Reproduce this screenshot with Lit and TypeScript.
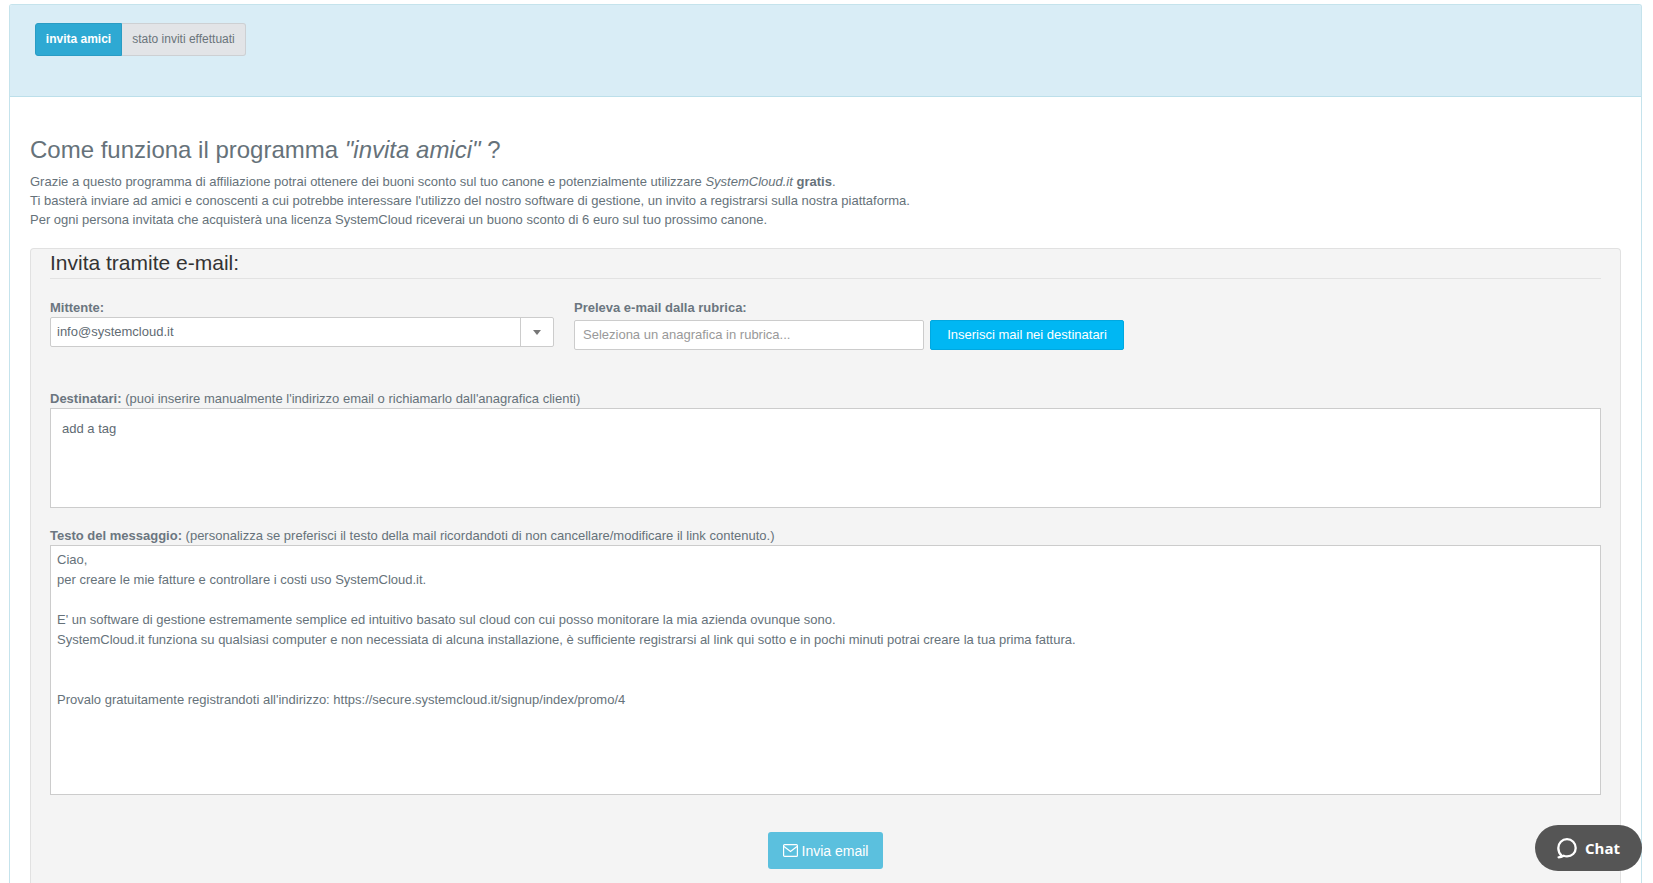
import { LitElement, html, css } from "lit";
import { customElement } from "lit/decorators.js";

@customElement("app-root")
export class AppRoot extends LitElement {
  static styles = css`
    :host { display: block; height: 883px; overflow: hidden; position: relative; background: #fff;
      font-family: "Liberation Sans", Arial, sans-serif; font-size: 13px; color: #66727a; box-sizing: border-box; padding: 4px 11px 0 9px; }
    * { box-sizing: border-box; }
    .panel { border: 1px solid #c5e3ec; border-bottom: 0; height: 879px; overflow: hidden; border-radius: 3px 3px 0 0; }
    .head { height: 92px; background: #d9edf6; border-bottom: 1px solid #bcdfea; padding: 18px 0 0 25px; }
    .tabs { display: inline-flex; height: 33px; font-size: 12px; }
    .tab { display: flex; align-items: center; line-height: 1; padding-bottom: 2px; }
    .tab.on { width: 87px; justify-content: center; background: #2ea9d3; color: #fff; font-weight: 700; border-radius: 3px 0 0 3px; border: 1px solid #2a9cc4; }
    .tab.off { width: 124px; justify-content: center; background: #e2e4e7; color: #6a747b; border: 1px solid #cdd0d3; border-left: 0; border-radius: 0 3px 3px 0; }
    .body { padding: 39px 20px 0 20px; }
    h1 { margin: 0; font-size: 24px; font-weight: 400; line-height: 28px; color: #66727a; }
    .intro { margin: 8px 0 0; line-height: 19px; }
    .intro b { font-weight: 700; }
    .field { margin-top: 19px; height: 700px; background: #f4f4f4; border: 1px solid #e1e1e1; border-bottom: 0; border-radius: 4px 4px 0 0; padding: 0 19px; }
    .legend { height: 30px; padding-top: 1px; border-bottom: 1px solid #e2e2e2; font-size: 21px; line-height: 25px; color: #333; }
    .row { display: flex; gap: 20px; margin-top: 22px; height: 84px; }
    .lbl { font-weight: 700; line-height: 14px; color: #6b7680; }
    .lbl span { font-weight: 400; color: #66727a; }
    .select { margin-top: 2px; width: 504px; height: 30px; display: flex; background: #fff; border: 1px solid #ccc; border-radius: 2px; line-height: 28px; padding-left: 6px; color: #5f6b73; }
    .select .txt { flex: 1; }
    .caret { width: 33px; border-left: 1px solid #ccc; display: flex; align-items: center; justify-content: center; }
    .caret i { width: 0; height: 0; border: 4px solid transparent; border-top: 5px solid #777; border-bottom: 0; }
    .inline { display: flex; gap: 6px; margin-top: 5px; }
    .input { width: 350px; height: 30px; background: #fff; border: 1px solid #ccc; border-radius: 2px; line-height: 27px; padding-left: 8px; color: #999; }
    .add { width: 194px; height: 30px; padding-bottom: 2px; background: #00b7f3; border: 1px solid #00a8e0; border-radius: 2px; color: #fff; display: flex; align-items: center; justify-content: center; }
    .m1 { margin-top: 7px; }
    .tagbox { margin-top: 2px; height: 100px; background: #fff; border: 1px solid #ccc; padding: 13px 11px; line-height: 14px; color: #5f6b73; }
    .m2 { margin-top: 21px; }
    .msg { margin-top: 2px; height: 250px; background: #fff; border: 1px solid #ccc; padding: 4px 6px; line-height: 20px; color: #66727a; white-space: pre-line; }
    .send { display: flex; justify-content: center; margin-top: 37px; }
    .sendbtn { width: 115px; height: 37px; background: #5bc0de; border-radius: 3px; color: #fff; font-size: 14px; display: flex; align-items: center; justify-content: center; gap: 4px; }
    .chat { position: absolute; left: 1535px; top: 825px; width: 107px; height: 46px; border-radius: 23px; background: #555; color: #fff; display: flex; align-items: center; padding-left: 22px; gap: 8px; font: 700 15px "Open Sans", sans-serif; }
  `;
  render() {
    return html`
      <div class="panel">
        <div class="head"><div class="tabs"><div class="tab on">invita amici</div><div class="tab off">stato inviti effettuati</div></div></div>
        <div class="body">
          <h1>Come funziona il programma <em>"invita amici"</em> ?</h1>
          <p class="intro">Grazie a questo programma di affiliazione potrai ottenere dei buoni sconto sul tuo canone e potenzialmente utilizzare <em>SystemCloud.it</em> <b>gratis</b>.<br>Ti basterà inviare ad amici e conoscenti a cui potrebbe interessare l'utilizzo del nostro software di gestione, un invito a registrarsi sulla nostra piattaforma.<br>Per ogni persona invitata che acquisterà una licenza SystemCloud riceverai un buono sconto di 6 euro sul tuo prossimo canone.</p>
          <div class="field">
            <div class="legend">Invita tramite e-mail:</div>
            <div class="row">
              <div><div class="lbl">Mittente:</div><div class="select"><div class="txt">info@systemcloud.it</div><div class="caret"><i></i></div></div></div>
              <div><div class="lbl">Preleva e-mail dalla rubrica:</div><div class="inline"><div class="input">Seleziona un anagrafica in rubrica...</div><div class="add">Inserisci mail nei destinatari</div></div></div>
            </div>
            <div class="lbl m1">Destinatari: <span>(puoi inserire manualmente l'indirizzo email o richiamarlo dall'anagrafica clienti)</span></div>
            <div class="tagbox">add a tag</div>
            <div class="lbl m2">Testo del messaggio: <span>(personalizza se preferisci il testo della mail ricordandoti di non cancellare/modificare il link contenuto.)</span></div>
            <div class="msg">Ciao,
per creare le mie fatture e controllare i costi uso SystemCloud.it.

E' un software di gestione estremamente semplice ed intuitivo basato sul cloud con cui posso monitorare la mia azienda ovunque sono.
SystemCloud.it funziona su qualsiasi computer e non necessiata di alcuna installazione, è sufficiente registrarsi al link qui sotto e in pochi minuti potrai creare la tua prima fattura.


Provalo gratuitamente registrandoti all'indirizzo: https://secure.systemcloud.it/signup/index/promo/4</div>
            <div class="send"><div class="sendbtn"><svg width="15" height="13" viewBox="0 0 15 13" fill="none" stroke="#fff" stroke-width="1.2"><rect x=".6" y=".6" width="13.8" height="11.8" rx="1"/><path d="M1 2.500l6.500 5 6.500-5"/></svg>Invia email</div></div>
          </div>
        </div>
      </div>
      <div class="chat"><svg width="20" height="22" viewBox="0 0 20 22" fill="none" stroke="#fff" stroke-width="2.300" stroke-linejoin="round"><path d="M1.600 20.300c1.400 0 2.400-.6 3-1.700C2.600 16.800 1.300 14.500 1.300 11 1.300 6 5.100 2.200 10 2.200S18.700 6 18.700 11 14.900 19.300 10 19.300c-1.200 0-2.300-.2-3.300-.6-1.500.9-3.200 1.500-5.100 1.600z"/></svg>Chat</div>
    `;
  }
}
